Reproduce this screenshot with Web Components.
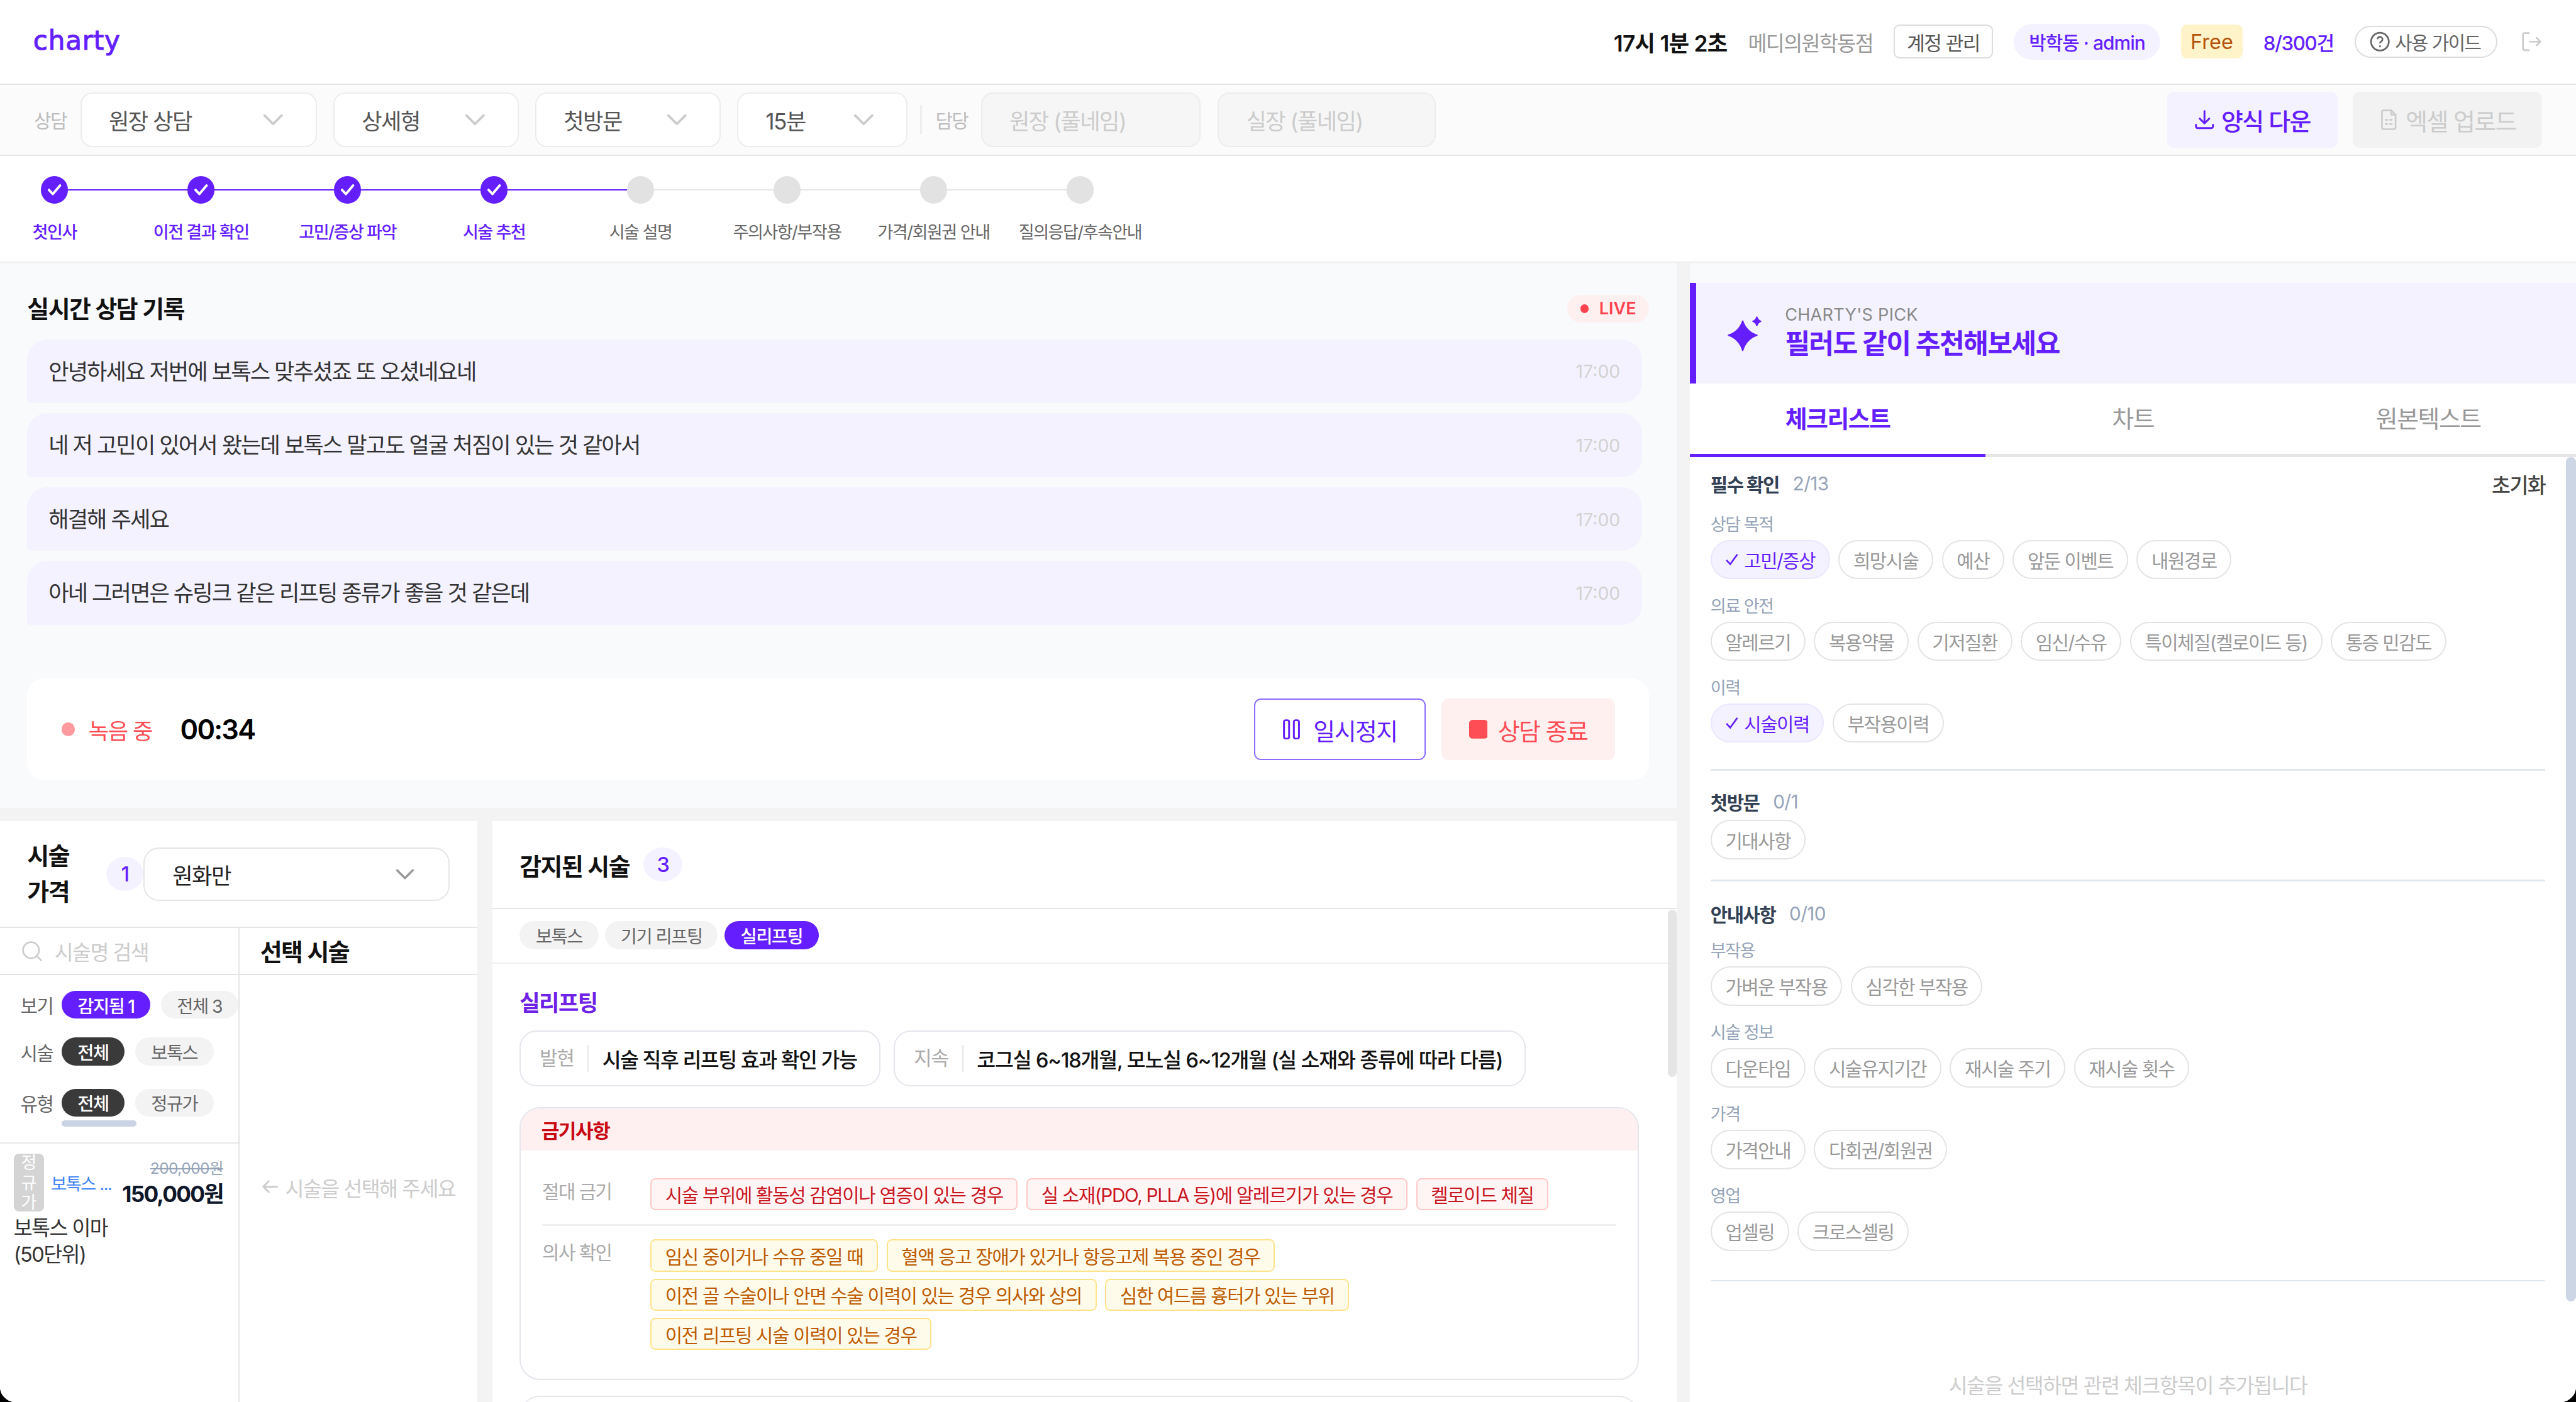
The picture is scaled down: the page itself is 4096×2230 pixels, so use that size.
<!DOCTYPE html>
<html lang="ko"><head><meta charset="utf-8"><title>charty</title>
<style>
html{zoom:2.70899;background:#000}
body{margin:0;font-family:Inter,"Noto Sans CJK KR",sans-serif;letter-spacing:-.035em;color:#111;-webkit-font-smoothing:antialiased}
</style></head><body>
<x-app>
  <x-topbar></x-topbar>
  <x-filterbar></x-filterbar>
  <x-stepper></x-stepper>
  <x-main></x-main>
</x-app>
<script>
const P='#651fff';
const def=(name,css,html)=>customElements.define(name,class extends HTMLElement{
  constructor(){super();this.attachShadow({mode:'open'}).innerHTML=`<style>:host{display:block}${css}</style>${html}`;}
});
const chev=(c='#ccc',w=12,h=7)=>`<svg width="${w}" height="${h}" viewBox="0 0 12 7" fill="none" stroke="${c}" stroke-width="1.4" stroke-linecap="round" stroke-linejoin="round"><path d="M1 1l5 5 5-5"/></svg>`;

def('x-app',`:host{width:1512px;height:823.2px;background:#fff;border-radius:0 0 9px 9px;overflow:hidden;display:flex;flex-direction:column}`,`<slot></slot>`);

def('x-pill',`:host{display:inline-flex;align-items:center;justify-content:center;height:16.5px;padding:0 9.5px;border-radius:9px;background:#f3f3f3;color:#666;font-size:10.5px;white-space:nowrap;flex:none}
:host([on]){background:${P};color:#fff;font-weight:500}
:host([dark]){background:#3a3a3a;color:#fff;font-weight:500}`,`<slot></slot>`);

def('x-chip',`:host{display:inline-flex;align-items:center;height:23px;box-sizing:border-box;padding:0 8px;border:1px solid #e4e4e4;border-radius:12px;background:#fff;color:#999;font-size:11px;white-space:nowrap;gap:3px}
:host([on]){background:#f4f2ff;border-color:#ebe6ff;color:${P}}
svg{display:none}:host([on]) svg{display:block}`,`<svg width="8" height="8" viewBox="0 0 8 8" fill="none" stroke="${P}" stroke-width="1"><path d="M.8 4.4 3 6.8 7.2 1"/></svg><slot></slot>`);

def('x-warn',`:host{display:inline-flex;align-items:center;height:19px;padding:0 8px;border:1px solid #ffe38a;border-radius:3px;background:#fffbea;color:#bd5a00;font-size:11px;white-space:nowrap;box-sizing:border-box;letter-spacing:-.5px}
:host([red]){border-color:#ffc9c9;background:#fff5f5;color:#c9161f}`,`<slot></slot>`);

def('x-topbar',`:host{height:49px;flex:none;border-bottom:1px solid #e5e5e5;display:flex;align-items:center;padding:0 20px 0 19.5px;font-size:12px;background:#fff}
.logo{font:400 15.5px "DejaVu Sans",sans-serif;letter-spacing:.02em;-webkit-text-stroke:.4px ${P};color:${P};line-height:1;margin-top:-1px}
.r{margin-left:auto;display:flex;align-items:center;gap:12.2px}
.time{font-weight:600;color:#111;letter-spacing:-.02em;font-size:13px}
.gray{color:#999}
.acc{height:20px;box-sizing:border-box;border:1px solid #ddd;border-radius:3.5px;padding:0 7px;display:flex;align-items:center;font-size:11.5px;color:#555}
.usr{height:21px;border-radius:11px;background:#f4f2ff;color:${P};font-size:11px;font-weight:500;padding:0 9px;display:flex;align-items:center;letter-spacing:-.03em}
.free{height:20px;border-radius:3.5px;background:#fff3c9;color:#b45309;font-weight:400;padding:0 5.5px;display:flex;align-items:center;letter-spacing:0}
.cnt{color:${P};font-weight:500;letter-spacing:-.04em;font-size:11.5px}
.help{height:19px;box-sizing:border-box;border:1px solid #ddd;border-radius:10px;padding:0 9px 0 8px;display:flex;align-items:center;gap:3px;font-size:11px;color:#666}
.out{display:flex;margin-left:2px}`,
`<span class="logo">charty</span><div class="r">
<span class="time">17시 1분 2초</span><span class="gray">메디의원학동점</span><span class="acc">계정 관리</span>
<span class="usr">박학동 · admin</span><span class="free">Free</span><span class="cnt">8/300건</span>
<span class="help"><svg width="12" height="12" viewBox="0 0 12 12" fill="none" stroke="#666" stroke-width="1"><circle cx="6" cy="6" r="5.2"/><path d="M4.5 4.6a1.5 1.5 0 0 1 3 .2c0 1-1.5 1.2-1.5 2.1"/><path d="M6 8.6v.3" stroke-linecap="round"/></svg>사용 가이드</span>
<span class="out"><svg width="12" height="12" viewBox="0 0 12 12" fill="none" stroke="#ccc" stroke-width="1" stroke-linecap="round" stroke-linejoin="round"><path d="M4.5 1H2a1 1 0 0 0-1 1v8a1 1 0 0 0 1 1h2.5"/><path d="M5 6h6.2M9 3.8 11.2 6 9 8.2"/></svg></span></div>`);

def('x-sel',`:host{height:32px;box-sizing:border-box;border:1px solid #ececec;border-radius:7px;background:#fff;display:flex;align-items:center;justify-content:space-between;padding:0 19px 0 16px;font-size:13px;color:#555;flex:none}`,`<slot></slot>${chev()}`);

def('x-filterbar',`:host{height:41px;flex:none;background:#fbfbfb;border-bottom:1px solid #e5e5e5;display:flex;align-items:center;padding:0 20px;font-size:11px;color:#bbb}
.l{margin-right:8px}
x-sel{margin-right:9.5px}
.div{width:1px;height:17px;background:#eee;margin:0 8px 0 -2px}
.in{height:32px;box-sizing:border-box;border:1px solid #ececec;border-radius:7px;background:#f6f6f6;padding:0 16px;display:flex;align-items:center;font-size:13px;color:#ccc;margin-right:10px}
.btn{height:33px;border-radius:4px;display:flex;align-items:center;justify-content:center;gap:4px;font-size:14px}
.dl{background:#f4f2ff;color:${P};width:100px;margin-left:auto;margin-right:9px;font-weight:500}
.up{background:#f2f2f2;color:#ccc;width:111px}`,
`<span class="l">상담</span><x-sel style="width:139px">원장 상담</x-sel><x-sel style="width:109px">상세형</x-sel><x-sel style="width:109px">첫방문</x-sel><x-sel style="width:100px">15분</x-sel>
<span class="div"></span><span class="l" style="margin-right:7.5px">담당</span><span class="in" style="width:129px">원장 (풀네임)</span><span class="in" style="width:128px">실장 (풀네임)</span>
<span class="btn dl"><svg width="12" height="12" viewBox="0 0 12 12" fill="none" stroke="${P}" stroke-width="1.1" stroke-linecap="round" stroke-linejoin="round"><path d="M6 1v7M3.2 5.4 6 8.2l2.8-2.8M1 9v1a1 1 0 0 0 1 1h8a1 1 0 0 0 1-1V9"/></svg>양식 다운</span>
<span class="btn up"><svg width="12" height="13" viewBox="0 0 12 13" fill="none" stroke="#ccc" stroke-width="1" stroke-linecap="round" stroke-linejoin="round"><path d="M7.5 1H3a1 1 0 0 0-1 1v9a1 1 0 0 0 1 1h6a1 1 0 0 0 1-1V3.5z"/><path d="M7.5 1v2.5H10M4.2 6.5h1M6.8 6.5h1M4.2 9h1M6.8 9h1"/></svg>엑셀 업로드</span>`);

def('x-step',`:host{width:86px;flex:none;display:flex;flex-direction:column;align-items:center;position:relative;font-size:10px;color:#666;white-space:nowrap}
.c{width:16px;height:16px;border-radius:50%;background:#e2e2e2;display:flex;align-items:center;justify-content:center;position:relative;z-index:1}
.c svg{display:none}
.t{margin-top:10px;line-height:14px}
:host([done]){color:${P};font-weight:500}:host([done]) .c{background:${P}}:host([done]) .c svg{display:block}
:host::after{content:"";position:absolute;left:43px;width:86px;top:7.5px;height:1px;background:#e6e6e6}
:host([done])::after{background:${P}}
:host([last])::after{display:none}`,
`<div class="c"><svg width="10" height="10" viewBox="0 0 10 10" fill="none" stroke="#fff" stroke-width="1.4" stroke-linecap="round" stroke-linejoin="round"><path d="M1.8 5.2 4.1 7.6 8.3 2.6"/></svg></div><div class="t"><slot></slot></div>`);

def('x-stepper',`:host{height:62px;flex:none;box-sizing:content-box;border-bottom:1px solid #eee;background:#fff;overflow:hidden}
.row{display:flex;padding-top:12px;margin-left:-11px}`,
`<div class="row"><x-step done>첫인사</x-step><x-step done>이전 결과 확인</x-step><x-step done>고민/증상 파악</x-step><x-step done>시술 추천</x-step><x-step>시술 설명</x-step><x-step>주의사항/부작용</x-step><x-step>가격/회원권 안내</x-step><x-step last>질의응답/후속안내</x-step></div>`);

def('x-msg',`:host{height:37.4px;box-sizing:border-box;background:#f4f2ff;border-radius:12px 12px 12px 2px;padding:0 13px 1.5px 12.5px;display:flex;align-items:center;justify-content:space-between;font-size:13px;color:#333;letter-spacing:-.055em}
span{font-size:10.5px;color:#d2d2d2;letter-spacing:0;padding-top:2px}`,`<slot></slot><span>17:00</span>`);

def('x-recorder',`:host{height:60px;border-radius:10px;background:#fff;display:flex;align-items:center;padding:0 20px;margin-top:auto}
.d{width:8px;height:8px;border-radius:50%;background:#ff9a9f;margin-right:8px}
.t{font-size:13px;color:#ff4d55}
.n{font-size:16px;font-weight:600;margin-left:16.5px;letter-spacing:-.04em;color:#000}
.b{height:36px;width:101px;box-sizing:border-box;border-radius:4px;display:flex;align-items:center;justify-content:center;gap:8px;font-size:14px}
.p{margin-left:auto;border:1px solid #8b6cff;color:${P};margin-right:9px;background:#fff}
.s{background:#fff0f0;color:#ff4d55;width:102px;gap:6px}`,
`<span class="d"></span><span class="t">녹음 중</span><span class="n">00:34</span>
<div class="b p"><svg width="10" height="12" viewBox="0 0 10 12" fill="none" stroke="${P}" stroke-width="1.1"><rect x=".6" y=".6" width="3" height="10.8" rx="1"/><rect x="6.4" y=".6" width="3" height="10.8" rx="1"/></svg>일시정지</div>
<div class="b s"><svg width="11" height="11" viewBox="0 0 11 11"><rect width="11" height="11" rx="2" fill="#ff4d55"/></svg>상담 종료</div>`);

def('x-transcript',`:host{height:320px;box-sizing:border-box;background:#f9fafc;padding:16px 16px 16px;display:flex;flex-direction:column;flex:none}
.h{display:flex;align-items:center;justify-content:space-between;height:20px;margin-bottom:9px}
.h b{font-size:14px;font-weight:600;color:#111}
.live{height:16px;width:48px;box-sizing:border-box;border-radius:8px;background:#fff0f0;color:#ff4450;font-size:10px;font-weight:600;letter-spacing:0;display:flex;align-items:center;justify-content:center;gap:6px;margin-top:2px}
.live i{width:5px;height:5px;border-radius:50%;background:#ff4450}
.l{display:flex;flex-direction:column;gap:6px;margin-right:4px}`,
`<div class="h"><b>실시간 상담 기록</b><span class="live"><i></i>LIVE</span></div>
<div class="l"><x-msg>안녕하세요 저번에 보톡스 맞추셨죠 또 오셨네요네</x-msg><x-msg>네 저 고민이 있어서 왔는데 보톡스 말고도 얼굴 처짐이 있는 것 같아서</x-msg><x-msg>해결해 주세요</x-msg><x-msg>아네 그러면은 슈링크 같은 리프팅 종류가 좋을 것 같은데</x-msg></div>
<x-recorder></x-recorder>`);

def('x-price',`:host{width:280px;flex:none;background:#fff;display:flex;flex-direction:column;overflow:hidden}
.top{height:62px;flex:none;border-bottom:1px solid #e5e5e5;display:flex;align-items:center;padding:0 16px;box-sizing:content-box}
.ti{width:46.5px;flex:none;font-size:14px;font-weight:600;line-height:21px;color:#111;word-break:keep-all}
.n{width:21.5px;height:20px;border-radius:50%;background:#f4f2ff;color:${P};font-size:12px;font-weight:500;display:flex;align-items:center;justify-content:center;flex:none}
.sel{flex:1;height:31.5px;box-sizing:border-box;border:1px solid #e5e5e5;border-radius:9px;display:flex;align-items:center;justify-content:space-between;padding:0 20px 0 16.5px;font-size:13px;color:#222}
.cols{flex:1;display:flex;min-height:0}
.a{width:140px;flex:none;border-right:1px solid #e5e5e5;display:flex;flex-direction:column;overflow:hidden}
.b{flex:1;display:flex;flex-direction:column}
.hd{height:27px;flex:none;border-bottom:1px solid #e5e5e5;display:flex;align-items:center}
.sr{padding-left:13px;gap:7px;color:#ccc;font-size:12px}
.st{padding-left:12px;font-size:14px;font-weight:600;color:#111;padding-bottom:1px;box-sizing:content-box;height:26px}
.f{padding:9px 0 0 12px;box-sizing:content-box;border-bottom:1px solid #e8e8e8;overflow:hidden;flex:none;height:89px}
.r{display:flex;align-items:center;font-size:11px;color:#666;overflow:hidden}
.r>span{width:24px;flex:none}
.r x-pill+x-pill{margin-left:6px}
.sb{width:44px;height:4px;border-radius:2px;background:#c9d3e3;margin:2px 0 0 24px}
.card{padding:6px 8px}
.c1{display:flex;align-items:center}
.tag{width:18px;height:34px;border-radius:3px;background:#d4d4d4;color:#fff;font-size:10px;line-height:11.5px;text-align:center;flex:none;display:flex;flex-direction:column;align-items:center;justify-content:center;letter-spacing:0}
.bl{font-size:10px;color:#3b82f6;margin-left:4px;white-space:nowrap;letter-spacing:-.05em}
.pr{margin-left:auto;text-align:right;margin-right:1px;white-space:nowrap}
.old{font-size:9px;color:#94a3b8;text-decoration:line-through;letter-spacing:-.02em;line-height:13px}
.new{font-size:13px;font-weight:700;color:#0f172a;letter-spacing:-.05em;line-height:17px}
.nm{font-size:12px;line-height:15.5px;color:#333;margin-top:2px;width:70px}
.hint{flex:1;display:flex;align-items:center;justify-content:center;gap:4px;color:#ccc;font-size:12px;padding-bottom:2px;white-space:nowrap}`,
`<div class="top"><div class="ti">시술 가격</div><div class="n">1</div><div class="sel">원화만${chev('#999',11,7)}</div></div>
<div class="cols"><div class="a">
<div class="hd sr"><svg width="12" height="12" viewBox="0 0 12 12" fill="none" stroke="#ccc" stroke-width="1"><circle cx="5.3" cy="5.3" r="4.7"/><path d="M8.8 8.8 11.5 11.5"/></svg>시술명 검색</div>
<div class="f"><div class="r"><span>보기</span><x-pill on>감지됨 1</x-pill><x-pill>전체 3</x-pill></div>
<div class="r" style="margin-top:11px"><span>시술</span><x-pill dark>전체</x-pill><x-pill>보톡스</x-pill></div>
<div class="r" style="margin-top:13.5px"><span>유형</span><x-pill dark>전체</x-pill><x-pill>정규가</x-pill></div><div class="sb"></div></div>
<div class="card"><div class="c1"><div class="tag"><span>정</span><span>규</span><span>가</span></div><span class="bl">보톡스 ...</span><div class="pr"><div class="old">200,000원</div><div class="new">150,000원</div></div></div><div class="nm">보톡스 이마 (50단위)</div></div>
</div><div class="b"><div class="hd st">선택 시술</div><div class="hint"><svg width="10" height="10" viewBox="0 0 10 10" fill="none" stroke="#ccc" stroke-width="1"><path d="M9.5 5H1M4.5 1.5 1 5l3.5 3.5"/></svg>시술을 선택해 주세요</div></div></div>`);

def('x-detected',`:host{flex:1;background:#fff;display:flex;flex-direction:column;overflow:hidden;position:relative}
.top{height:51px;flex:none;border-bottom:1px solid #e5e5e5;display:flex;align-items:center;padding:0 16px;gap:8px}
.top b{font-size:14px;font-weight:600;color:#111}
.n{width:23px;height:20px;border-radius:50%;background:#f4f2ff;color:${P};font-size:12px;font-weight:500;display:flex;align-items:center;justify-content:center}
.tabs{height:32px;flex:none;box-sizing:border-box;border-bottom:1px solid #f0f0f0;padding:7px 16px 0;display:flex;gap:4px}
.tabs x-pill{padding:0 9.5px}
.tabs x-pill.w{padding:0 9px}
.body{flex:1;padding:13px 22px 0 16px;overflow:hidden}
h3{margin:0 0 6px;font-size:13px;font-weight:600;color:#6f22e6;line-height:20px}
.info{display:flex;gap:8px}
.ic{height:33px;box-sizing:border-box;border:1px solid #e4e6ec;border-radius:10px;padding:0 13px 0 11px;display:flex;align-items:center;font-size:12px;font-weight:500;color:#111;white-space:nowrap}
.ic.w{letter-spacing:-.43px}
.ic i{font-style:normal;font-weight:400;color:#aaa;font-size:11.5px;padding-right:8px;margin-right:8px;border-right:1px solid #e8e8e8;line-height:16px}
.con{margin-top:12px;border:1px solid #e4e6ec;border-radius:12px;overflow:hidden}
.ch{height:25px;background:#fef0f0;color:#c90a14;font-size:11.5px;font-weight:700;display:flex;align-items:center;padding-left:12px}
.rows{padding:16px 12.5px 17px}
.rw{display:flex;gap:0}
.rw>span{width:63.5px;flex:none;font-size:11px;color:#aaa;line-height:16px}
.tags{display:flex;flex-wrap:wrap;gap:4px 5px;align-items:flex-start}
.d{height:1px;background:#f0f0f0;margin:8px 0}
.con2{margin-top:9px;height:60px}
.sb{position:absolute;right:0;top:52px;width:5px;height:98px;border-radius:3px;background:#e5e5e5}`,
`<div class="top"><b>감지된 시술</b><span class="n">3</span></div>
<div class="tabs"><x-pill>보톡스</x-pill><x-pill class="w">기기 리프팅</x-pill><x-pill on>실리프팅</x-pill></div>
<div class="body"><h3>실리프팅</h3>
<div class="info"><div class="ic"><i>발현</i>시술 직후 리프팅 효과 확인 가능</div><div class="ic w"><i>지속</i>코그실 6~18개월, 모노실 6~12개월 (실 소재와 종류에 따라 다름)</div></div>
<div class="con"><div class="ch">금기사항</div><div class="rows">
<div class="rw"><span>절대 금기</span><div class="tags"><x-warn red>시술 부위에 활동성 감염이나 염증이 있는 경우</x-warn><x-warn red>실 소재(PDO, PLLA 등)에 알레르기가 있는 경우</x-warn><x-warn red>켈로이드 체질</x-warn></div></div>
<div class="d"></div>
<div class="rw"><span>의사 확인</span><div class="tags"><x-warn>임신 중이거나 수유 중일 때</x-warn><x-warn>혈액 응고 장애가 있거나 항응고제 복용 중인 경우</x-warn><x-warn>이전 골 수술이나 안면 수술 이력이 있는 경우 의사와 상의</x-warn><x-warn>심한 여드름 흉터가 있는 부위</x-warn><x-warn>이전 리프팅 시술 이력이 있는 경우</x-warn></div></div>
</div></div><div class="con con2"></div></div>
<div class="sb"></div>`);

def('x-left',`:host{width:984px;flex:none;display:flex;flex-direction:column;gap:8px;min-height:0}
.bt{flex:1;min-height:0;display:flex;gap:9px}`,
`<x-transcript></x-transcript><div class="bt"><x-price></x-price><x-detected></x-detected></div>`);

def('x-group',`:host{margin-bottom:9px}
.l{font-size:10px;line-height:14px;color:#94a3b8;margin-bottom:2px}
.c{display:flex;flex-wrap:wrap;gap:5px}`,`<div class="l"><slot name="l"></slot></div><div class="c"><slot></slot></div>`);

def('x-sec',`:host{display:flex;align-items:center;height:16px;font-size:11px;font-weight:700;color:#334155;gap:8px}
span{font-weight:400;color:#94a3b8;letter-spacing:-.02em}`,`<slot></slot><span><slot name="n"></slot></span>`);

def('x-right',`:host{width:520px;flex:none;background:#fff;display:flex;flex-direction:column;min-height:0;overflow:hidden;position:relative}
.gap{height:12px;flex:none;background:#f9fafc}
.pick{height:59px;flex:none;box-sizing:border-box;background:#f4f2ff;border-left:4px solid ${P};display:flex;align-items:center;padding-left:18px;gap:13px}
.pk{font-size:10px;color:#888;letter-spacing:.01em;line-height:12px}
.pt{font-size:16px;font-weight:700;color:${P};line-height:21px;letter-spacing:-.04em}
.tabs{display:flex;height:43px;flex:none;box-sizing:border-box;border-bottom:2px solid #e5e5e5}
.tb{flex:1;display:flex;align-items:center;justify-content:center;font-size:14px;color:#999;margin-bottom:-2px;padding-bottom:2px;box-sizing:border-box;border-bottom:2px solid transparent}
.tb.on{color:${P};font-weight:600;border-bottom-color:${P}}
.body{flex:1;padding:7px 18px 0 12px;overflow:hidden}
.hd{display:flex;justify-content:space-between;align-items:center;margin-bottom:8.5px}
.rs{font-size:12px;color:#444;font-weight:500}
hr{border:0;height:1px;background:#e2e8f0;margin:15.5px 0 10px}
x-group:last-of-type{margin-bottom:0}
.sp{margin-bottom:3px}
.nt{margin:52.5px 0 0;text-align:center;font-size:12px;line-height:18px;color:#ccc}
.sb{position:absolute;right:0;top:114px;width:6px;height:496px;border-radius:3px;background:#ccd6e4}`,
`<div class="gap"></div>
<div class="pick"><svg width="21" height="21" viewBox="0 0 20 20" fill="${P}" stroke="${P}" stroke-width=".7" stroke-linejoin="round"><path d="M8.8 3Q10.8 9 16.8 11Q10.8 13 8.8 19.5Q6.8 13 .8 11Q6.8 9 8.8 3Z"/><path d="M16.7.8Q17.3 2.6 18.9 3.2Q17.3 3.8 16.7 5.6Q16.1 3.8 14.5 3.2Q16.1 2.6 16.7.8Z"/></svg><div><div class="pk">CHARTY'S PICK</div><div class="pt">필러도 같이 추천해보세요</div></div></div>
<div class="tabs"><div class="tb on">체크리스트</div><div class="tb">차트</div><div class="tb">원본텍스트</div></div>
<div class="body">
<div class="hd"><x-sec>필수 확인<span slot="n">2/13</span></x-sec><span class="rs">초기화</span></div>
<x-group><span slot="l">상담 목적</span><x-chip on>고민/증상</x-chip><x-chip>희망시술</x-chip><x-chip>예산</x-chip><x-chip>앞둔 이벤트</x-chip><x-chip>내원경로</x-chip></x-group>
<x-group><span slot="l">의료 안전</span><x-chip>알레르기</x-chip><x-chip>복용약물</x-chip><x-chip>기저질환</x-chip><x-chip>임신/수유</x-chip><x-chip>특이체질(켈로이드 등)</x-chip><x-chip>통증 민감도</x-chip></x-group>
<x-group><span slot="l">이력</span><x-chip on>시술이력</x-chip><x-chip>부작용이력</x-chip></x-group>
<hr>
<x-sec class="sp">첫방문<span slot="n">0/1</span></x-sec>
<x-group style="margin:0"><x-chip>기대사항</x-chip></x-group>
<hr style="margin:12px 0 11px">
<x-sec style="margin-bottom:7px">안내사항<span slot="n">0/10</span></x-sec>
<x-group><span slot="l">부작용</span><x-chip>가벼운 부작용</x-chip><x-chip>심각한 부작용</x-chip></x-group>
<x-group><span slot="l">시술 정보</span><x-chip>다운타임</x-chip><x-chip>시술유지기간</x-chip><x-chip>재시술 주기</x-chip><x-chip>재시술 횟수</x-chip></x-group>
<x-group><span slot="l">가격</span><x-chip>가격안내</x-chip><x-chip>다회권/회원권</x-chip></x-group>
<x-group><span slot="l">영업</span><x-chip>업셀링</x-chip><x-chip>크로스셀링</x-chip></x-group>
<hr style="margin:17px 0 0">
<p class="nt">시술을 선택하면 관련 체크항목이 추가됩니다</p>
</div><div class="sb"></div>`);

def('x-main',`:host{flex:1;min-height:0;display:flex;gap:8px;background:#f3f3f3}`,`<x-left></x-left><x-right></x-right>`);
</script>
</body></html>
